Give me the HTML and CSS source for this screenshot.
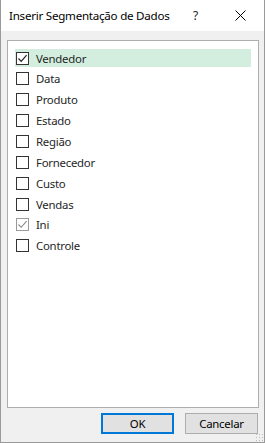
FILE: index.html
```html
<!DOCTYPE html>
<html lang="pt-BR">
<head>
  <meta charset="UTF-8" />
  <title>Inserir Segmentação de Dados</title>
  <link rel="stylesheet" href="styles.css">
</head>
<body>

<div class="dialog">
  <div class="titlebar">
    <span class="title">Inserir Segmentação de Dados</span>
    <span class="help">?</span>
    <span class="close">
      <svg width="11" height="11" viewBox="0 0 11 11"><path d="M0.5 0.5 L10.5 10.5 M10.5 0.5 L0.5 10.5" stroke="#000" stroke-width="1" fill="none"/></svg>
    </span>
  </div>

  <div class="content">
    <div class="listbox">
      <div class="item selected"><span class="box checked"><svg width="11" height="11" viewBox="0 0 11 11"><path d="M1.5 5.5 L4.2 8.3 L9.6 2.2" stroke="#222" stroke-width="1.2" fill="none"/></svg></span>Vendedor</div>
      <div class="item"><span class="box"></span>Data</div>
      <div class="item"><span class="box"></span>Produto</div>
      <div class="item"><span class="box"></span>Estado</div>
      <div class="item"><span class="box"></span>Região</div>
      <div class="item"><span class="box"></span>Fornecedor</div>
      <div class="item"><span class="box"></span>Custo</div>
      <div class="item"><span class="box"></span>Vendas</div>
      <div class="item"><span class="box light"><svg width="11" height="11" viewBox="0 0 11 11"><path d="M1.5 5.5 L4.2 8.3 L9.6 2.2" stroke="#8a8a8a" stroke-width="1.1" fill="none"/></svg></span>Ini</div>
      <div class="item"><span class="box"></span>Controle</div>
    </div>

    <div class="actions">
      <button class="btn default">OK</button>
      <button class="btn">Cancelar</button>
    </div>
    <span class="grip"></span>
  </div>
</div>

</body>
</html>
```

FILE: styles.css
```css
body {
  margin: 0;
  padding: 0;
  background: #f0f0f0;
  font-family: "Noto Sans", "Open Sans", sans-serif;
  font-size: 11.4px;
  letter-spacing: -0.25px;
}

.dialog {
  width: 263px;
  height: 442px;
  border-left: 1px solid #9a9a9a;
  border-right: 1px solid #9a9a9a;
  border-bottom: 1px solid #9a9a9a;
  background: #f0f0f0;
  display: flex;
  flex-direction: column;
}

.titlebar {
  height: 31px;
  background: #fff;
  display: flex;
  align-items: center;
  color: #000;
}

.title {
  padding-left: 8px;
  font-size: 11.6px;
}

.help {
  margin-left: auto;
  width: 12px;
  margin-right: 30px;
  font-size: 12px;
  color: #222;
}

.close {
  width: 11px;
  height: 11px;
  margin-right: 18px;
  display: flex;
}

.content {
  position: relative;
  flex: 1;
  padding: 9px 5px 0 6px;
}

.listbox {
  box-sizing: border-box;
  height: 368px;
  background: #fff;
  border: 1px solid #adadad;
  padding: 8px 7px 0 7px;
}

.item {
  height: 18px;
  margin-bottom: 2.86px;
  display: flex;
  align-items: center;
  padding-left: 1px;
  color: #262626;
}

.item.selected {
  background: #d3eedf;
}

.box {
  width: 11px;
  height: 11px;
  border: 1px solid #333;
  background: #fff;
  margin-right: 7px;
  display: flex;
}

.box.light {
  border-color: #9a9a9a;
}

.actions {
  display: flex;
  justify-content: flex-end;
  gap: 11px;
  padding: 5px 1px 0 0;
}

.btn {
  width: 73px;
  height: 21px;
  font-family: inherit;
  font-size: 11.4px;
  letter-spacing: -0.25px;
  background: #e1e1e1;
  border: 1px solid #adadad;
  color: #000;
  padding: 0;
}

.btn.default {
  border: 2px solid #0078d7;
}

.grip {
  position: absolute;
  right: 1px;
  bottom: 1px;
  width: 8px;
  height: 8px;
  background-image: radial-gradient(circle, #bcbcbc 0.9px, transparent 1px);
  background-size: 3px 3px;
}
```
